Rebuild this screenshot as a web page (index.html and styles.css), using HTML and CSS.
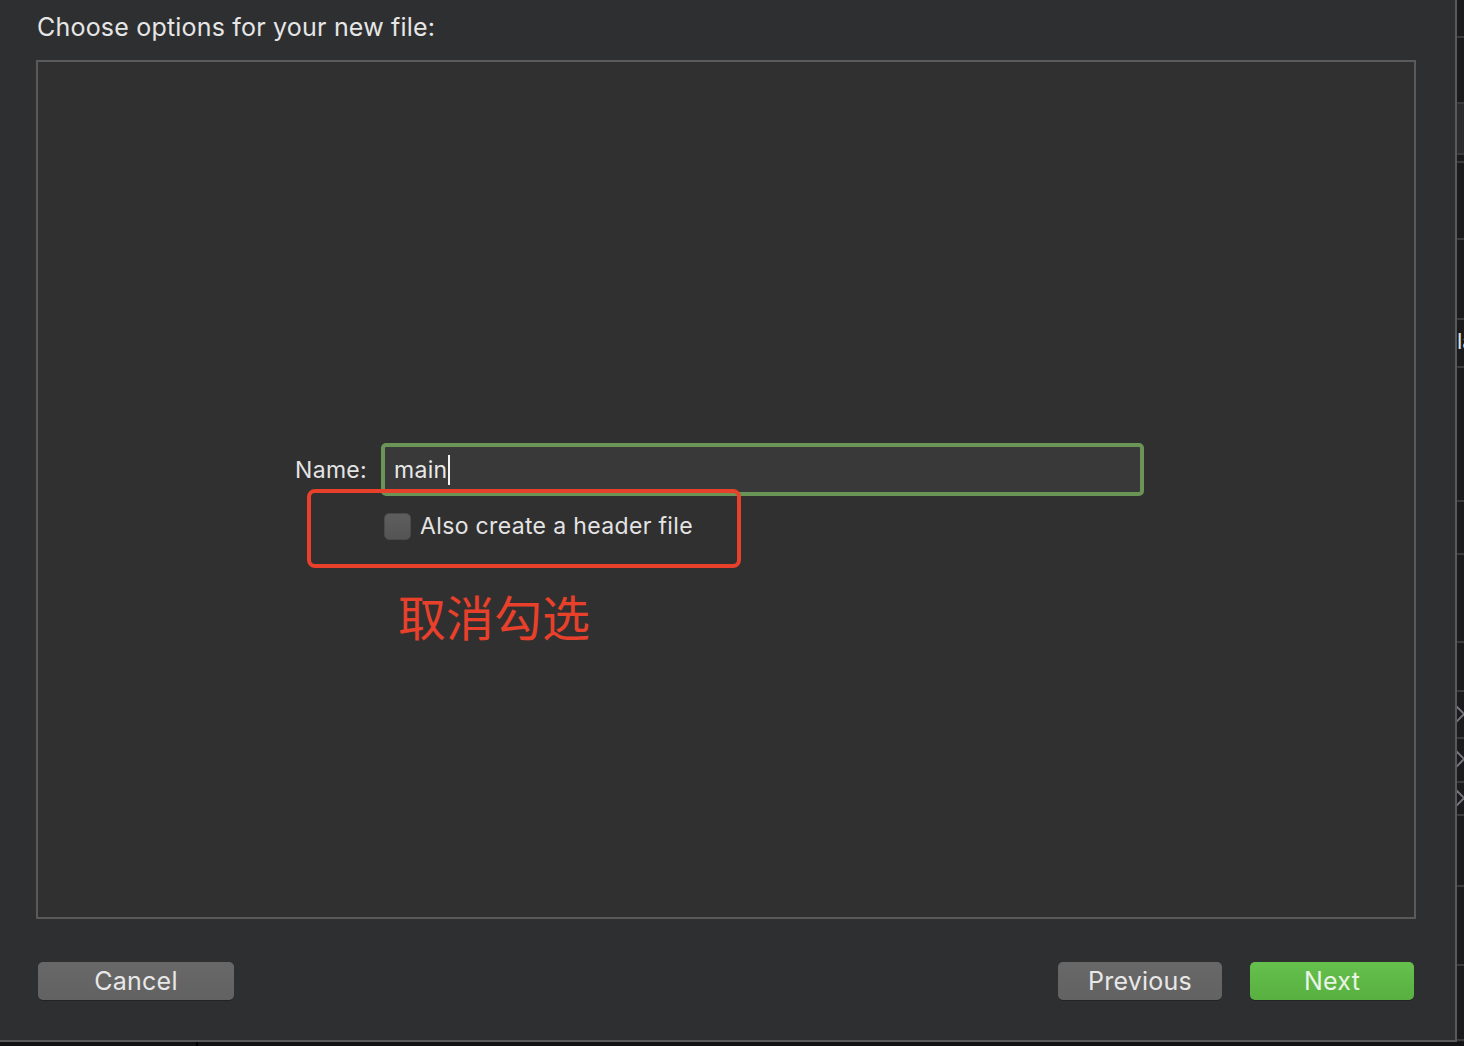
FILE: index.html
```html
<!DOCTYPE html>
<html lang="en">
<head>
<meta charset="utf-8">
<title>Choose options for your new file</title>
<link rel="stylesheet" href="styles.css">
</head>
<body>
<div class="screen">
  <div class="top">
    <div class="dialog">
      <div class="title">Choose options for your new file:</div>
      <div class="panel">
        <div class="form">
          <label class="name-label">Name:</label>
          <div class="name-field"><span class="value">main</span><span class="caret"></span></div>
          <div class="check-row">
            <span class="checkbox"></span>
            <span class="check-text">Also create a header file</span>
          </div>
          <div class="note">取消勾选</div>
        </div>
        <div class="highlight"></div>
      </div>
      <div class="buttons">
        <button class="btn cancel">Cancel</button>
        <div class="spacer"></div>
        <button class="btn prev">Previous</button>
        <button class="btn next">Next</button>
      </div>
    </div>
    <div class="bgwin">
      <div class="seg" style="height:38px"></div>
      <div class="seg" style="height:66px"></div>
      <div class="seg light" style="height:51px"></div>
      <div class="seg" style="height:8px"></div>
      <div class="seg" style="height:77px"></div>
      <div class="seg" style="height:80px"></div>
      <div class="seg" style="height:48px"><span class="frag">la</span></div>
      <div class="seg" style="height:134px"></div>
      <div class="seg" style="height:53px"></div>
      <div class="seg" style="height:88px"></div>
      <div class="seg" style="height:49px"></div>
      <div class="seg chev" style="height:47px"></div>
      <div class="seg chev" style="height:44px"></div>
      <div class="seg chev" style="height:33px"></div>
      <div class="seg" style="height:71px"></div>
      <div class="seg" style="height:79px"></div>
      <div class="seg" style="height:75px"></div>
    </div>
  </div>
  <div class="bottom"><div class="bottom-left"></div></div>
</div>
</body>
</html>
```

FILE: styles.css
```css
html, body {
  margin: 0;
  padding: 0;
  background: #19191b;
}
.screen {
  width: 1464px;
  height: 1046px;
  overflow: hidden;
  display: flex;
  flex-direction: column;
  font-family: Inter, "Liberation Sans", "Noto Sans CJK SC", sans-serif;
}
.top {
  display: flex;
  height: 1042px;
}
.dialog {
  box-sizing: border-box;
  width: 1457px;
  height: 1042px;
  background: #2e2f31;
  border-right: 2px solid #58595b;
  border-bottom: 2px solid #58595b;
  padding-top: 13px;
  display: flex;
  flex-direction: column;
}
.title {
  margin-left: 37px;
  font-size: 25px;
  line-height: 28px;
  color: #e6e6e6;
  letter-spacing: 0.2px;
}
.panel {
  position: relative;
  box-sizing: border-box;
  margin-top: 19px;
  margin-left: 36px;
  width: 1380px;
  height: 859px;
  border: 2px solid #5a5a5a;
  background: #303030;
  padding-top: 381px;
  padding-left: 257px;
}
.form {
  display: grid;
  grid-template-columns: 72px 763px;
  column-gap: 14px;
  align-items: center;
}
.name-label {
  text-align: right;
  font-size: 23px;
  letter-spacing: 0.3px;
  color: #e4e4e4;
}
.name-field {
  box-sizing: border-box;
  height: 53px;
  border: 4px solid #6b9557;
  border-radius: 5px;
  background: #393939;
  padding-left: 9px;
  display: flex;
  align-items: center;
}
.value {
  font-size: 23px;
  letter-spacing: 0.3px;
  color: #e8e8e8;
}
.caret {
  width: 2px;
  height: 30px;
  background: #f2f2f2;
  margin-left: 1px;
}
.check-row {
  grid-column: 2;
  margin-top: 16px;
  margin-left: 3px;
  display: flex;
  align-items: center;
  gap: 9px;
  height: 28px;
}
.checkbox {
  box-sizing: border-box;
  width: 27px;
  height: 27px;
  border-radius: 5px;
  background: linear-gradient(#5e5e5e, #545454);
  border: 1px solid #4a4a4a;
}
.check-text {
  font-size: 23px;
  letter-spacing: 0.35px;
  color: #e4e4e4;
}
.note {
  grid-column: 2;
  margin-top: 49px;
  margin-left: 17px;
  font-family: "Noto Sans CJK SC", sans-serif;
  font-size: 48px;
  line-height: 52px;
  color: #e8402a;
}
.highlight {
  position: absolute;
  left: 269px;
  top: 427px;
  width: 434px;
  height: 79px;
  box-sizing: border-box;
  border: 4px solid #e8402a;
  border-radius: 8px;
}
.buttons {
  display: flex;
  margin-top: 43px;
  padding-left: 38px;
  padding-right: 41px;
  gap: 28px;
}
.spacer {
  flex: 1;
}
.btn {
  height: 38px;
  border: none;
  border-radius: 5px;
  background: linear-gradient(#686868, #626262);
  color: #e8e8e8;
  font-family: Inter, "Liberation Sans", sans-serif;
  font-size: 25px;
  letter-spacing: 0.25px;
  padding: 0;
  box-shadow: 0 1px 0 rgba(0,0,0,0.25);
}
.cancel { width: 196px; }
.prev { width: 164px; }
.next {
  width: 164px;
  background: linear-gradient(#66c04d, #57b03f);
  color: #eaf4e6;
}
.bgwin {
  flex: 1;
  background: #1b1b1e;
  display: flex;
  flex-direction: column;
  overflow: hidden;
}
.seg {
  position: relative;
  box-sizing: border-box;
  border-bottom: 2px solid #3b3b3e;
}
.seg.light {
  background: #2c2c2e;
}
.frag {
  position: absolute;
  left: 0;
  top: 10px;
  font-size: 22px;
  line-height: 22px;
  color: #e0e0e0;
  white-space: nowrap;
}
.seg.chev::after {
  content: "";
  position: absolute;
  left: -6px;
  top: 50%;
  width: 10px;
  height: 10px;
  margin-top: -7px;
  border-right: 2px solid #77777a;
  border-top: 2px solid #77777a;
  transform: rotate(45deg);
}
.bottom {
  flex: 1;
  background: #121214;
  position: relative;
}
.bottom-left {
  width: 196px;
  height: 100%;
  border-right: 2px solid #000;
}
```
